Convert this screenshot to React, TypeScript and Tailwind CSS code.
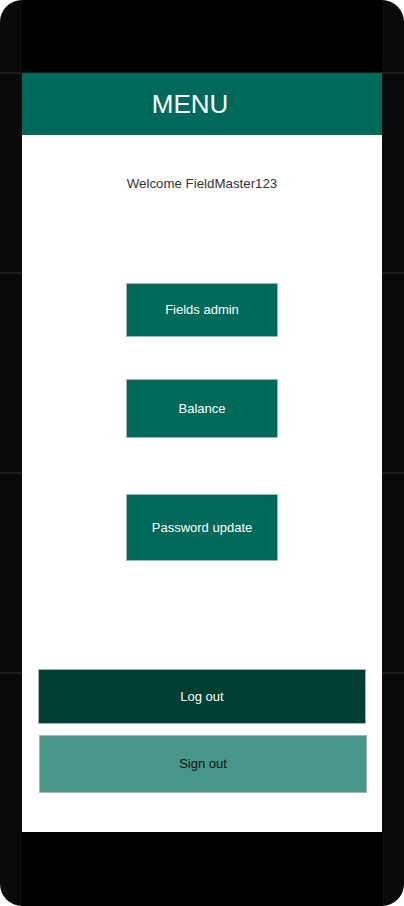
import React from 'react';

const btn = 'flex items-center justify-center border border-[#a3b8b4] text-[13px]';

export default function App() {
  return (
    <div className="min-h-screen bg-white font-['Liberation_Sans',Arial,sans-serif]">
      <div className="flex h-[906px] w-[404px] overflow-hidden rounded-[22px] bg-[#0a0a0a] bg-[repeating-linear-gradient(to_bottom,transparent_0_72px,#1c1c1c_72px_74px,transparent_74px_200px)] bg-[length:100%_800px] bg-no-repeat">
        <div className="w-[22px]" />
        <div className="flex w-[360px] flex-col">
          <div className="h-[73px] bg-black bg-[linear-gradient(to_bottom,transparent_0_72px,#1c1c1c_72px_73px)]" />
          <div className="flex h-[759px] flex-col bg-white">
            <header className="flex h-[62px] items-center justify-center bg-[#006a5a] pr-6 text-[26px] text-white">
              MENU
            </header>
            <p className="mt-[39px] text-center text-[13.3px] text-[#333]">Welcome FieldMaster123</p>

            <button className={`${btn} mx-auto mt-[89px] h-[54px] w-[152px] bg-[#006a5a] text-white`}>
              Fields admin
            </button>
            <button className={`${btn} mx-auto mt-[42px] h-[59px] w-[152px] bg-[#006a5a] text-white`}>
              Balance
            </button>
            <button className={`${btn} mx-auto mt-[56px] h-[67px] w-[152px] bg-[#006a5a] text-white`}>
              Password update
            </button>

            <button className={`${btn} ml-[16px] mt-[108px] h-[55px] w-[328px] bg-[#003d33] text-white`}>
              Log out
            </button>
            <button className={`${btn} ml-[17px] mt-[11px] h-[58px] w-[328px] bg-[#46978a] text-[#111]`}>
              Sign out
            </button>
          </div>
          <div className="flex-1 bg-black" />
        </div>
        <div className="w-[22px]" />
      </div>
    </div>
  );
}
